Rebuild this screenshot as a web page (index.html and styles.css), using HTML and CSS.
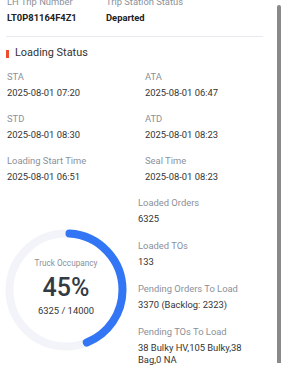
FILE: index.html
```html
<!DOCTYPE html>
<html>
<head>
<meta charset="utf-8">
<link rel="stylesheet" href="styles.css">
</head>
<body>
<div class="panel">
  <div class="trip">
    <div class="field">
      <div class="label">LH Trip Number</div>
      <div class="value strong">LT0P81164F4Z1</div>
    </div>
    <div class="field">
      <div class="label">Trip Station Status</div>
      <div class="value strong">Departed</div>
    </div>
  </div>
  <div class="divider"></div>
  <div class="section-title"><span class="mark"></span>Loading Status</div>
  <div class="times">
    <div class="field"><div class="label">STA</div><div class="value">2025-08-01 07:20</div></div>
    <div class="field"><div class="label">ATA</div><div class="value">2025-08-01 06:47</div></div>
    <div class="field"><div class="label">STD</div><div class="value">2025-08-01 08:30</div></div>
    <div class="field"><div class="label">ATD</div><div class="value">2025-08-01 08:23</div></div>
    <div class="field"><div class="label">Loading Start Time</div><div class="value">2025-08-01 06:51</div></div>
    <div class="field"><div class="label">Seal Time</div><div class="value">2025-08-01 08:23</div></div>
  </div>
  <div class="occupancy">
    <div class="gauge">
      <svg width="122" height="122" viewBox="0 0 122 122">
        <circle cx="61" cy="61" r="56.5" fill="none" stroke="#f2f4f9" stroke-width="8"/>
        <circle cx="61" cy="61" r="56.5" fill="none" stroke="#3276f5" stroke-width="8" stroke-linecap="round" pathLength="100" stroke-dasharray="43 100" stroke-dashoffset="-1" transform="rotate(-90 61 61)"/>
      </svg>
      <div class="gauge-text">
        <div class="g-label">Truck Occupancy</div>
        <div class="g-pct">45%</div>
        <div class="g-count">6325 / 14000</div>
      </div>
    </div>
    <div class="stats">
      <div class="field"><div class="label">Loaded Orders</div><div class="value">6325</div></div>
      <div class="field"><div class="label">Loaded TOs</div><div class="value">133</div></div>
      <div class="field"><div class="label">Pending Orders To Load</div><div class="value">3370 (Backlog: 2323)</div></div>
      <div class="field"><div class="label">Pending TOs To Load</div><div class="value wrap">38 Bulky HV,105 Bulky,38 Bag,0 NA</div></div>
    </div>
  </div>
</div>
<div class="scrollbar"></div>
</body>
</html>
```
FILE: styles.css
```css
html, body {
  margin: 0;
  padding: 0;
  background: #ffffff;
  overflow: hidden;
}
body {
  font-family: Roboto, "Liberation Sans", sans-serif;
  font-size: 9.4px;
  color: #333333;
  width: 281px;
  height: 371px;
}
.panel {
  margin-top: -5px;
  padding: 0 18px 0 7px;
}
.trip {
  display: flex;
}
.trip .field:first-child {
  width: 99px;
}
.field .label {
  color: #8b9099;
  line-height: 14px;
  white-space: nowrap;
}
.field .value {
  color: #333333;
  line-height: 14px;
  margin-top: 2px;
  white-space: nowrap;
}
.value.strong {
  font-weight: 700;
  color: #222222;
}
.divider {
  height: 1px;
  background: #e9e9f2;
  margin: 11px 0 0 -1px;
}
.section-title {
  display: flex;
  align-items: center;
  font-size: 10.9px;
  color: #333333;
  line-height: 14px;
  margin-top: 9px;
  margin-left: -1px;
}
.mark {
  display: inline-block;
  width: 3px;
  height: 8px;
  background: #ee4d2d;
  margin-right: 6px;
  margin-top: 1px;
}
.times {
  display: grid;
  grid-template-columns: 138px 1fr;
  row-gap: 12px;
  margin-top: 10px;
}
.occupancy {
  display: flex;
  margin-top: 12px;
}
.gauge {
  position: relative;
  width: 122px;
  height: 122px;
  margin-top: 33px;
  margin-left: -2px;
  margin-right: 11px;
}
.gauge svg {
  display: block;
}
.gauge-text {
  position: absolute;
  left: 0;
  right: 0;
  top: 28px;
  text-align: center;
}
.g-label {
  font-size: 8.2px;
  color: #8b9099;
  line-height: 12px;
}
.g-pct {
  font-size: 25px;
  font-weight: 500;
  color: #333a44;
  line-height: 28px;
  margin-top: 5px;
}
.g-count {
  font-size: 9.4px;
  color: #333333;
  line-height: 12px;
  margin-top: 3px;
}
.stats {
  display: flex;
  flex-direction: column;
  gap: 13px;
}
.stats .value.wrap {
  white-space: normal;
  line-height: 12px;
  margin-top: 3px;
  width: 110px;
}
.scrollbar {
  position: absolute;
  top: 5px;
  right: 0;
  width: 4px;
  height: 358px;
  background: #8a8a8a;
  border-radius: 2px 2px 0 0;
}
```
